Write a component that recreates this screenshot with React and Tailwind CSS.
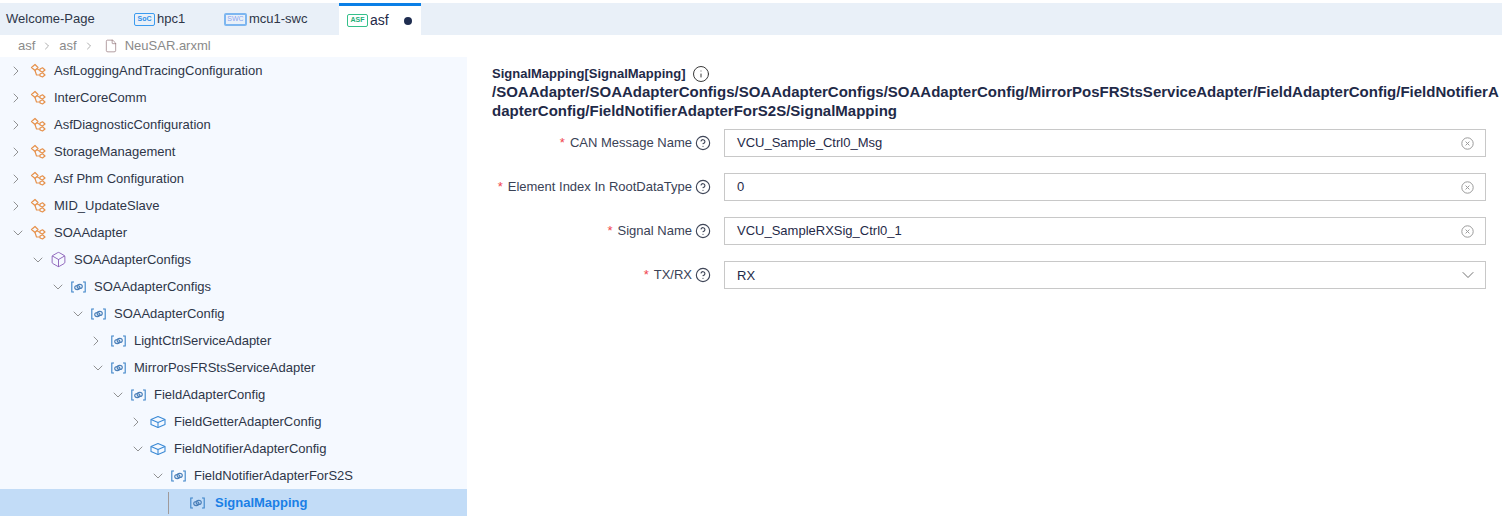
import React from 'react';
import { ChevronRight, ChevronDown, Box, File, Info, CircleHelp } from 'lucide-react';

const FONT = "font-['Liberation_Sans','Roboto',sans-serif]";

const TreeIcon = () => (
  <svg width="16" height="16" viewBox="0 0 16 16" fill="none" stroke="#e6924d" strokeWidth="1.2" strokeLinejoin="round" className="shrink-0">
    <path d="M1.5 4.5 L5 1.5 L8 4.5 L5 7.5 Z" />
    <path d="M5 7.5 L6.5 12 H10" />
    <path d="M7 5.8 L10 7.5" />
    <path d="M10 6 L12.5 4.8 L15 7 L12.5 9 L10 8 Z" />
    <path d="M10 11 L12.5 9.8 L15 12 L12.5 14 L10 13 Z" />
  </svg>
);

const LinkIcon = () => (
  <svg width="15" height="12" viewBox="0 0 15 12" fill="none" stroke="#3b82c8" strokeWidth="1.1" className="shrink-0">
    <path d="M3 1 H0.8 V11 H3" />
    <path d="M12 1 H14.2 V11 H12" />
    <ellipse cx="6.3" cy="6.6" rx="2.6" ry="2" stroke="#4a7fb8" />
    <ellipse cx="8.7" cy="5.4" rx="2.6" ry="2" stroke="#4a7fb8" />
  </svg>
);

const BlueBox = () => (
  <svg width="16" height="16" viewBox="0 0 16 16" fill="none" stroke="#3b8ad6" strokeWidth="1.1" strokeLinejoin="round" className="shrink-0">
    <path d="M8 2.5 L15 5.5 V10.5 L8 13.5 L1 10.5 V5.5 Z" />
    <path d="M1 5.5 L8 8.5 L15 5.5" />
    <path d="M8 8.5 V13.5" />
  </svg>
);

const rows = [
  { label: 'AsfLoggingAndTracingConfiguration', depth: 0, arrow: 'right', icon: 'tree' },
  { label: 'InterCoreComm', depth: 0, arrow: 'right', icon: 'tree' },
  { label: 'AsfDiagnosticConfiguration', depth: 0, arrow: 'right', icon: 'tree' },
  { label: 'StorageManagement', depth: 0, arrow: 'right', icon: 'tree' },
  { label: 'Asf Phm Configuration', depth: 0, arrow: 'right', icon: 'tree' },
  { label: 'MID_UpdateSlave', depth: 0, arrow: 'right', icon: 'tree' },
  { label: 'SOAAdapter', depth: 0, arrow: 'down', icon: 'tree' },
  { label: 'SOAAdapterConfigs', depth: 1, arrow: 'down', icon: 'box' },
  { label: 'SOAAdapterConfigs', depth: 2, arrow: 'down', icon: 'link' },
  { label: 'SOAAdapterConfig', depth: 3, arrow: 'down', icon: 'link' },
  { label: 'LightCtrlServiceAdapter', depth: 4, arrow: 'right', icon: 'link' },
  { label: 'MirrorPosFRStsServiceAdapter', depth: 4, arrow: 'down', icon: 'link' },
  { label: 'FieldAdapterConfig', depth: 5, arrow: 'down', icon: 'link' },
  { label: 'FieldGetterAdapterConfig', depth: 6, arrow: 'right', icon: 'blue' },
  { label: 'FieldNotifierAdapterConfig', depth: 6, arrow: 'down', icon: 'blue' },
  { label: 'FieldNotifierAdapterForS2S', depth: 7, arrow: 'down', icon: 'link' },
];

const depthPad = ['pl-[10px]', 'pl-[30px]', 'pl-[50px]', 'pl-[70px]', 'pl-[90px]', 'pl-[110px]', 'pl-[130px]', 'pl-[150px]'];

const RowIcon = ({ type }) => {
  if (type === 'tree') return <TreeIcon />;
  if (type === 'box') return <Box size={17} strokeWidth={1.3} className="shrink-0 text-[#8a5fb8]" />;
  if (type === 'blue') return <BlueBox />;
  return <LinkIcon />;
};

const TreeRow = ({ row }) => (
  <div className={`flex h-[27px] items-center text-[13px] text-[#2e3648] ${depthPad[row.depth]}`}>
    <span className="flex w-[12px] shrink-0 justify-center text-[#777]">
      {row.arrow === 'right'
        ? <ChevronRight size={16} strokeWidth={1.2} className="shrink-0" />
        : <ChevronDown size={16} strokeWidth={1.2} className="ml-[3px] shrink-0" />}
    </span>
    <span className="ml-[8px] flex w-[16px] justify-center"><RowIcon type={row.icon} /></span>
    <span className="ml-[8px] whitespace-nowrap">{row.label}</span>
  </div>
);

const ClearIcon = () => (
  <svg width="13" height="13" viewBox="0 0 13 13" fill="none" stroke="#9a9a9a" strokeWidth="1" className="mr-[-1px] shrink-0">
    <circle cx="6.5" cy="6.5" r="5.7" />
    <path d="M4.6 4.6 L8.4 8.4 M8.4 4.6 L4.6 8.4" />
  </svg>
);

const Field = ({ label, value, select }) => (
  <div className="flex h-[28px] items-center">
    <div className="flex w-[219px] items-center justify-end text-[13px] text-[#3a4256]">
      <span className="mr-[5px] text-[#f0444d]">*</span>
      <span className="whitespace-nowrap">{label}</span>
      <CircleHelp size={16} strokeWidth={1.7} className="ml-[3px] shrink-0 text-[#3f4658]" />
    </div>
    <div className={`ml-[13px] flex h-[28px] w-[762px] items-center justify-between border border-[#c8c8c8] pl-[12px] text-[13px] text-[#1f2a48] ${select ? 'pr-[7px]' : 'pr-[12px]'}`}>
      <span className={select ? 'pt-[1px]' : ''}>{value}</span>
      {select ? <ChevronDown size={20} strokeWidth={1} className="text-[#555]" /> : <ClearIcon />}
    </div>
  </div>
);

const Tag = ({ text, cls }) => (
  <span className={`mr-[1px] flex h-[13px] items-center justify-center rounded-[2px] text-[7px] font-bold ${cls}`}>{text}</span>
);

export default function App() {
  return (
    <div className={`flex h-[516px] w-[1502px] flex-col overflow-hidden bg-white ${FONT}`}>
      <div className="mt-[3px] flex h-[32px] shrink-0 items-center bg-[#e9f0f8] text-[13px] text-[#2e3648]">
        <span className="ml-[6px] w-[128px]">Welcome-Page</span>
        <span className="flex w-[90px] items-center">
          <Tag text="SoC" cls="w-[21px] border-[1.5px] border-[#3b9bf0] text-[#2f8fe8]" />
          <span className="ml-[1px]">hpc1</span>
        </span>
        <span className="flex w-[115px] items-center">
          <Tag text="SWC" cls="w-[23px] border-2 border-[#7db6f0] font-normal text-[#8aa4f0]" />
          <span className="ml-[1px]">mcu1-swc</span>
        </span>
        <span className="flex h-[32px] w-[82px] items-center border-t-[3px] border-[#0a7fe6] bg-white pl-[8px] text-[#1f2a48]">
          <Tag text="ASF" cls="w-[21px] border-[1.5px] border-[#35c08a] text-[#1fae78]" />
          <span className="ml-[1px] text-[14px]">asf</span>
          <span className="ml-[15px] h-[8px] w-[8px] rounded-full bg-[#1f2d50]" />
        </span>
      </div>

      <div className="flex h-[22px] shrink-0 items-center pl-[18px] text-[13px] text-[#8a8a8a]">
        <span>asf</span>
        <ChevronRight size={12} strokeWidth={1.2} className="mx-[6px] text-[#777]" />
        <span>asf</span>
        <ChevronRight size={12} strokeWidth={1.2} className="mx-[6px] text-[#777]" />
        <File size={14} strokeWidth={1.1} className="ml-[3px] mr-[7px] text-[#8a6a70]" />
        <span>NeuSAR.arxml</span>
      </div>

      <div className="flex min-h-0 flex-1">
        <div className="w-[467px] shrink-0 bg-[#f5f9ff]">
          {rows.map((row, i) => <TreeRow key={i} row={row} />)}
          <div className="flex h-[27px] items-center bg-[#c2dcf7] pl-[168px]">
            <span className="h-[22px] w-px bg-[#a09a9a]" />
            <span className="ml-[21px]"><LinkIcon /></span>
            <span className="ml-[10px] text-[13px] font-bold text-[#1a7fe6]">SignalMapping</span>
          </div>
        </div>

        <div className="min-w-0 flex-1 pl-[25px] pr-[2px] pt-[8px]">
          <div className="flex h-[17px] items-center text-[13px] font-bold text-[#1f2a48]">
            <span>SignalMapping[SignalMapping]</span>
            <Info size={18} strokeWidth={1.3} className="ml-[6px] text-[#333]" />
          </div>
          <div className="break-all text-[15px] font-bold leading-[19px] text-[#1f2a48]">
            /SOAAdapter/SOAAdapterConfigs/SOAAdapterConfigs/SOAAdapterConfig/MirrorPosFRStsServiceAdapter/FieldAdapterConfig/FieldNotifierAdapterConfig/FieldNotifierAdapterForS2S/SignalMapping
          </div>
          <div className="mt-[9px] flex flex-col gap-[16px]">
            <Field label="CAN Message Name" value="VCU_Sample_Ctrl0_Msg" />
            <Field label="Element Index In RootDataType" value="0" />
            <Field label="Signal Name" value="VCU_SampleRXSig_Ctrl0_1" />
            <Field label="TX/RX" value="RX" select />
          </div>
        </div>
      </div>
    </div>
  );
}
